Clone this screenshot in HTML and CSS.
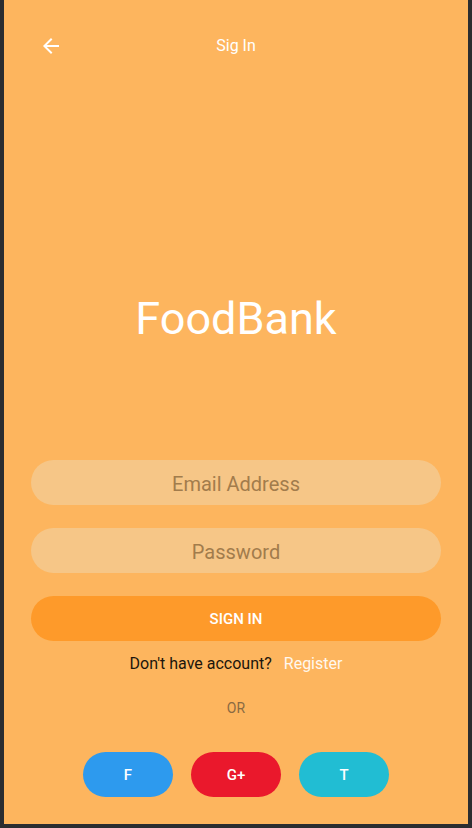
FILE: index.html
```html
<!DOCTYPE html>
<html lang="en">
<head>
<meta charset="utf-8">
<title>FoodBank - Sign In</title>
<link rel="stylesheet" href="styles.css">
</head>
<body>
<div class="screen">
  <header class="appbar">
    <button class="back" aria-label="Back">
      <svg width="24" height="24" viewBox="0 0 24 24"><path d="M20 11H7.83l5.59-5.59L12 4l-8 8 8 8 1.41-1.41L7.83 13H20v-2z" fill="#fff"/></svg>
    </button>
    <div class="title">Sig In</div>
    <div></div>
  </header>
  <h1 class="brand">FoodBank</h1>
  <form class="form">
    <div class="field">Email Address</div>
    <div class="field">Password</div>
    <div class="btn-primary">SIGN IN</div>
  </form>
  <p class="account"><span class="q">Don't have account?</span><span class="reg">Register</span></p>
  <p class="or">OR</p>
  <div class="socials">
    <div class="social fb">F</div>
    <div class="social gp">G+</div>
    <div class="social tw">T</div>
  </div>
</div>
</body>
</html>
```

FILE: styles.css
```css
* { box-sizing: border-box; }
html, body { margin: 0; padding: 0; }
body {
  background: #2b2d30;
  font-family: Roboto, "Noto Sans", sans-serif;
  width: 472px;
  height: 828px;
  overflow: hidden;
}
.screen {
  margin: 0 4px 4px 4px;
  width: 464px;
  height: 824px;
  background: #fdb55e;
  display: flex;
  flex-direction: column;
}
.appbar {
  height: 92px;
  display: grid;
  grid-template-columns: 1fr auto 1fr;
  align-items: center;
}
.back {
  justify-self: start;
  margin-left: 35px;
  width: 24px;
  height: 24px;
  padding: 0;
  border: 0;
  background: none;
  display: flex;
}
.title {
  color: #fff;
  font-size: 16px;
  line-height: 20px;
}
.brand {
  margin: 200px 0 0;
  font-weight: 400;
  font-size: 45px;
  line-height: 54px;
  color: #fff;
  text-align: center;
}
.form {
  margin: 114px 27px 0;
  display: flex;
  flex-direction: column;
  gap: 23px;
}
.field {
  height: 45px;
  padding-top: 2px;
  border-radius: 23px;
  background: #f6c687;
  color: #a27c4c;
  font-size: 20px;
  display: flex;
  align-items: center;
  justify-content: center;
}
.btn-primary {
  height: 45px;
  padding-top: 1px;
  border-radius: 23px;
  background: #fe9a2a;
  color: #fff;
  font-size: 15px;
  font-weight: 500;
  display: flex;
  align-items: center;
  justify-content: center;
}
.account {
  margin: 13px 0 0;
  line-height: 20px;
  font-size: 16px;
  text-align: center;
  display: flex;
  justify-content: center;
  gap: 12px;
}
.account .q { color: #1c150c; }
.account .reg { color: #fff8ee; }
.or {
  margin: 24px 0 0;
  line-height: 20px;
  font-size: 14px;
  text-align: center;
  color: #8a6a42;
}
.socials {
  margin-top: 34px;
  display: flex;
  justify-content: center;
  gap: 18px;
}
.social {
  width: 90px;
  height: 45px;
  border-radius: 23px;
  color: #fff;
  font-size: 15px;
  font-weight: 500;
  display: flex;
  align-items: center;
  justify-content: center;
}
.fb { background: #2d9aee; }
.gp { background: #ea182c; }
.tw { background: #21bdd3; }
```
